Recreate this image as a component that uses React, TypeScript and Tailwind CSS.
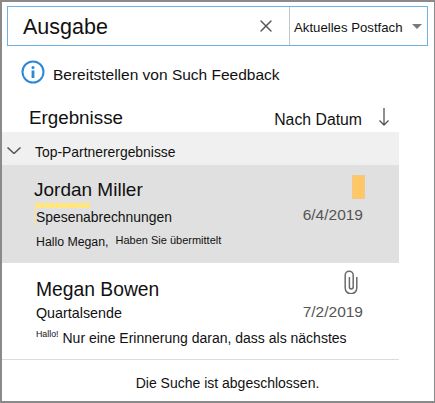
import { X } from 'lucide-react';

function InfoIcon() {
  return (
    <svg width="24" height="24" viewBox="0 0 24 24" fill="none" className="shrink-0">
      <circle cx="12" cy="12" r="10.5" stroke="#2b88d8" strokeWidth="2" />
      <circle cx="12" cy="7.5" r="1.5" fill="#2b88d8" />
      <rect x="10.6" y="10.5" width="2.8" height="7.5" fill="#2b88d8" />
    </svg>
  );
}

function ClipIcon() {
  return (
    <svg width="14" height="24" viewBox="0 0 14 24" fill="none" className="block">
      <path
        d="M12.8 7v11a5.8 5.8 0 0 1-11.6 0V5.2a4 4 0 0 1 8 0V17a1.9 1.9 0 0 1-3.8 0V7"
        stroke="#6b6b6b"
        strokeWidth="1.5"
      />
    </svg>
  );
}

export default function App() {
  return (
    <div className="flex h-[403px] w-[435px] flex-col overflow-hidden border-y-2 border-r border-l-2 border-[#8a8a8a] bg-white font-['Liberation_Sans',sans-serif] text-[#111111]">
      {/* search box */}
      <div className="mt-1 ml-[5px] flex h-[40px] w-[421px] shrink-0 items-center border border-[#6cb2e4]">
        <span className="ml-[15px] flex-1 pt-[2px] text-[21.5px]">Ausgabe</span>
        <X className="mr-[13px] h-[20px] w-[20px] text-[#555555]" strokeWidth={1.7} />
        <div className="flex h-full w-[138px] items-center border-l border-[#c6c6c6] pl-[4px]">
          <span className="pt-[4px] text-[13.2px]">Aktuelles Postfach</span>
          <span className="ml-[9px] h-0 w-0 border-x-[5px] border-t-[5px] border-x-transparent border-t-[#7a7a7a]" />
        </div>
      </div>

      {/* feedback link */}
      <div className="mt-[14px] ml-[19px] flex items-center gap-2">
        <InfoIcon />
        <span className="pt-[5px] text-[15.5px] leading-[18px]">Bereitstellen von Such Feedback</span>
      </div>

      {/* results header */}
      <div className="mt-[16px] flex h-[32px] w-[397px] items-center justify-between pr-[10px] pl-[27px]">
        <span className="pt-[4px] text-[18.8px]">Ergebnisse</span>
        <div className="flex items-center gap-[17px]">
          <span className="pt-[8px] text-[15.8px]">Nach Datum</span>
          <svg width="10" height="18" viewBox="0 0 10 18" fill="none" stroke="#555555" strokeWidth="1.3" className="mt-[2px]">
            <path d="M5 0v17M0.5 12.5 5 17l4.5-4.5" />
          </svg>
        </div>
      </div>

      {/* results */}
      <div className="w-[397px]">
        <div className="flex h-[33px] items-center gap-[14px] bg-[#f0f0f0] pl-[5px]">
          <svg width="14" height="7" viewBox="0 0 14 7" fill="none" stroke="#555555" strokeWidth="1.5" className="mt-[4px]">
            <path d="M0.5 0.5 7 6.5l6.5-6" />
          </svg>
          <span className="pt-[8px] text-[13.9px] leading-[21px]">Top-Partnerergebnisse</span>
        </div>

        <div className="flex h-[98px] justify-between bg-[#e0e0e0] pr-[36px] pl-[32px]">
          <div className="flex flex-col">
            <span className="mt-[13px] text-[19px] leading-[24px]">Jordan Miller</span>
            <span className="mt-[1px] ml-[1px] h-[5px] w-[55px] bg-[#ffe680]" />
            <span className="ml-[1px] border-l border-[#ffe680] text-[13.9px] leading-[18px]">Spesenabrechnungen</span>
            <div className="mt-[6px] flex items-center pl-[2px]">
              <span className="text-[12.3px]">Hallo Megan,</span>
              <span className="mb-[4px] ml-[7px] text-[11px]">Haben Sie übermittelt</span>
            </div>
          </div>
          <div className="flex flex-col items-end">
            <span className="mt-[10px] -mr-[2px] h-[24px] w-[13px] border border-[#f0c88a] bg-[#ffc766]" />
            <span className="mt-[4px] text-[15.5px] text-[#555555]">6/4/2019</span>
          </div>
        </div>

        <div className="flex h-[97px] justify-between border-b border-[#dcdcdc] pr-[36px] pl-[34px]">
          <div className="flex min-w-0 flex-1 flex-col">
            <span className="mt-[15px] text-[19.3px] leading-[24px]">Megan Bowen</span>
            <span className="mt-[2px] text-[14.3px] leading-[18px]">Quartalsende</span>
            <div className="mt-[6px] flex items-start whitespace-nowrap">
              <span className="text-[8.8px]">Hallo!</span>
              <span className="ml-[4px] text-[14px]">Nur eine Erinnerung daran, dass als nächstes</span>
            </div>
          </div>
          <div className="flex flex-col items-end">
            <div className="mt-[7px] mr-[5px]">
              <ClipIcon />
            </div>
            <span className="mt-[6px] text-[15.5px] text-[#555555]">7/2/2019</span>
          </div>
        </div>
      </div>

      <div className="flex flex-1 items-center justify-center pt-[6px] pl-[19px] text-[14px]">
        Die Suche ist abgeschlossen.
      </div>
    </div>
  );
}
